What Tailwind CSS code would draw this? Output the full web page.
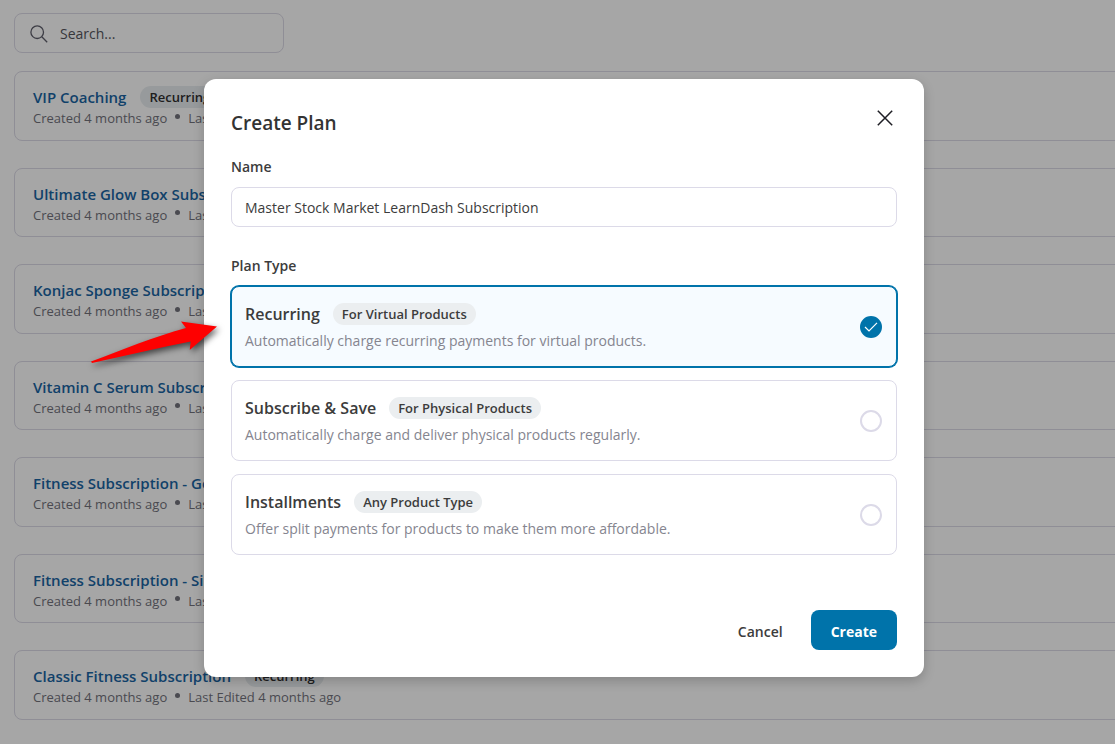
<!DOCTYPE html>
<html lang="en">
<head>
<meta charset="utf-8">
<title>Create Plan</title>
<script src="https://cdn.jsdelivr.net/npm/@tailwindcss/browser@4"></script>
</head>
<body class="relative h-screen overflow-hidden bg-white font-['Open_Sans',sans-serif] text-[#3c3c3c]">

<main class="pl-[14px] pt-[13px]">
  <label class="flex h-10 w-[270px] items-center gap-3 rounded-lg border border-[#dcdae6] px-[15px] text-[#5f5f6b]">
    <svg class="mt-px size-[18px] shrink-0" viewBox="0 0 18 18" fill="none" stroke="currentColor" stroke-width="1.3"><circle cx="7.2" cy="7.2" r="6.3"/><path d="M11.8 11.8 17.2 17.2"/></svg>
    <input type="search" aria-label="Search" placeholder="Search..." class="w-full bg-transparent pt-px text-sm outline-none placeholder:text-[#55555b]">
  </label>

  <ul class="-mr-5 mt-[18px] grid min-h-[649px] auto-rows-fr gap-[27px] text-[13px] leading-5 text-[#72727c]">
    <li class="rounded-lg border border-[#dcdae6] px-[18px] pt-[14px]">
      <div class="flex items-center gap-[14px]"><a href="#" class="text-[15px] leading-[22px] font-semibold text-[#1a65a3]">VIP Coaching</a><span class="rounded-full bg-[#e9edf0] px-[9px] leading-[22px] font-semibold text-[#2f2f2f]">Recurring</span></div>
      <p class="flex items-center gap-2">Created 4 months ago <i class="mb-1 size-[5px] rounded-full bg-[#72727c]"></i> Last Edited 4 months ago</p>
    </li>
    <li class="rounded-lg border border-[#dcdae6] px-[18px] pt-[14px]">
      <div class="flex items-center gap-[14px]"><a href="#" class="text-[15px] leading-[22px] font-semibold text-[#1a65a3]">Ultimate Glow Box Subscription</a><span class="rounded-full bg-[#e9edf0] px-[9px] leading-[22px] font-semibold text-[#2f2f2f]">Recurring</span></div>
      <p class="flex items-center gap-2">Created 4 months ago <i class="mb-1 size-[5px] rounded-full bg-[#72727c]"></i> Last Edited 4 months ago</p>
    </li>
    <li class="rounded-lg border border-[#dcdae6] px-[18px] pt-[14px]">
      <div class="flex items-center gap-[14px]"><a href="#" class="text-[15px] leading-[22px] font-semibold text-[#1a65a3]">Konjac Sponge Subscription</a><span class="rounded-full bg-[#e9edf0] px-[9px] leading-[22px] font-semibold text-[#2f2f2f]">Recurring</span></div>
      <p class="flex items-center gap-2">Created 4 months ago <i class="mb-1 size-[5px] rounded-full bg-[#72727c]"></i> Last Edited 4 months ago</p>
    </li>
    <li class="rounded-lg border border-[#dcdae6] px-[18px] pt-[14px]">
      <div class="flex items-center gap-[14px]"><a href="#" class="text-[15px] leading-[22px] font-semibold text-[#1a65a3]">Vitamin C Serum Subscription</a><span class="rounded-full bg-[#e9edf0] px-[9px] leading-[22px] font-semibold text-[#2f2f2f]">Recurring</span></div>
      <p class="flex items-center gap-2">Created 4 months ago <i class="mb-1 size-[5px] rounded-full bg-[#72727c]"></i> Last Edited 4 months ago</p>
    </li>
    <li class="rounded-lg border border-[#dcdae6] px-[18px] pt-[14px]">
      <div class="flex items-center gap-[14px]"><a href="#" class="text-[15px] leading-[22px] font-semibold text-[#1a65a3]">Fitness Subscription - Gold</a><span class="rounded-full bg-[#e9edf0] px-[9px] leading-[22px] font-semibold text-[#2f2f2f]">Recurring</span></div>
      <p class="flex items-center gap-2">Created 4 months ago <i class="mb-1 size-[5px] rounded-full bg-[#72727c]"></i> Last Edited 4 months ago</p>
    </li>
    <li class="rounded-lg border border-[#dcdae6] px-[18px] pt-[14px]">
      <div class="flex items-center gap-[14px]"><a href="#" class="text-[15px] leading-[22px] font-semibold text-[#1a65a3]">Fitness Subscription - Silver</a><span class="rounded-full bg-[#e9edf0] px-[9px] leading-[22px] font-semibold text-[#2f2f2f]">Recurring</span></div>
      <p class="flex items-center gap-2">Created 4 months ago <i class="mb-1 size-[5px] rounded-full bg-[#72727c]"></i> Last Edited 4 months ago</p>
    </li>
    <li class="rounded-lg border border-[#dcdae6] px-[18px] pt-[14px]">
      <div class="flex items-center gap-[14px]"><a href="#" class="text-[15px] leading-[22px] font-semibold text-[#1a65a3]">Classic Fitness Subscription</a><span class="rounded-full bg-[#e9edf0] px-[9px] leading-[22px] font-semibold text-[#2f2f2f]">Recurring</span></div>
      <p class="flex items-center gap-2">Created 4 months ago <i class="mb-1 size-[5px] rounded-full bg-[#72727c]"></i> Last Edited 4 months ago</p>
    </li>
  </ul>
</main>

<div class="absolute inset-0 flex items-start justify-center bg-black/35 pl-[13px] pt-[79px]">
  <form role="dialog" aria-labelledby="dialog-title" class="w-full max-w-[720px] rounded-xl bg-white p-[27px] shadow-[0_4px_12px_rgba(0,0,0,0.2)]">
    <header class="flex items-start justify-between">
      <h2 id="dialog-title" class="pt-1 text-[19px] leading-[26px] font-semibold text-[#333]">Create Plan</h2>
      <button type="button" aria-label="Close" class="grid size-6 place-items-center text-[#1e1e24]">
        <svg class="size-4" viewBox="0 0 16 16" fill="none" stroke="currentColor" stroke-width="1.5"><path d="M.8.8l14.4 14.4M15.2.8.8 15.2"/></svg>
      </button>
    </header>

    <label for="plan-name" class="mt-[21px] block text-sm leading-5 font-semibold">Name</label>
    <input id="plan-name" type="text" value="Master Stock Market LearnDash Subscription" class="mt-[10px] block h-10 w-full rounded-lg border border-[#dcdae8] px-[13px] text-sm outline-none">

    <fieldset class="mt-[29px]">
      <legend class="text-sm leading-5 font-semibold">Plan Type</legend>
      <div class="mt-[10px] grid gap-[13px]">
        <label class="flex items-center justify-between rounded-lg border border-[#dcdae8] pt-[15px] pb-[15px] pr-[14px] pl-[13px] has-checked:border-[#0073aa] has-checked:bg-[#f6fbff] has-checked:ring-1 has-checked:ring-[#0073aa]">
          <span class="grid gap-[5px]">
            <span class="flex items-center gap-[13px]"><b class="text-base leading-6 font-semibold">Recurring</b><span class="rounded-full bg-[#ebeef0] px-[9px] text-[13px] leading-[22px] font-semibold">For Virtual Products</span></span>
            <span class="text-sm leading-5 text-[#85858f]">Automatically charge recurring payments for virtual products.</span>
          </span>
          <span class="grid place-items-center">
            <input type="radio" name="plan" checked class="peer col-start-1 row-start-1 size-[22px] appearance-none rounded-full border-2 border-[#dcdae8] checked:border-[#0073aa] checked:bg-[#0073aa]">
            <svg class="invisible col-start-1 row-start-1 h-[10px] w-[14px] peer-checked:visible" viewBox="0 0 14 10" fill="none" stroke="#fff" stroke-width="1.2"><path d="M1 5l4 4L13 .8"/></svg>
          </span>
        </label>
        <label class="flex items-center justify-between rounded-lg border border-[#dcdae8] pt-[15px] pb-[15px] pr-[14px] pl-[13px] has-checked:border-[#0073aa] has-checked:bg-[#f6fbff] has-checked:ring-1 has-checked:ring-[#0073aa]">
          <span class="grid gap-[5px]">
            <span class="flex items-center gap-[13px]"><b class="text-base leading-6 font-semibold">Subscribe &amp; Save</b><span class="rounded-full bg-[#ebeef0] px-[9px] text-[13px] leading-[22px] font-semibold">For Physical Products</span></span>
            <span class="text-sm leading-5 text-[#85858f]">Automatically charge and deliver physical products regularly.</span>
          </span>
          <span class="grid place-items-center">
            <input type="radio" name="plan" class="peer col-start-1 row-start-1 size-[22px] appearance-none rounded-full border-2 border-[#dcdae8] checked:border-[#0073aa] checked:bg-[#0073aa]">
            <svg class="invisible col-start-1 row-start-1 h-[10px] w-[14px] peer-checked:visible" viewBox="0 0 14 10" fill="none" stroke="#fff" stroke-width="1.2"><path d="M1 5l4 4L13 .8"/></svg>
          </span>
        </label>
        <label class="flex items-center justify-between rounded-lg border border-[#dcdae8] pt-[15px] pb-[15px] pr-[14px] pl-[13px] has-checked:border-[#0073aa] has-checked:bg-[#f6fbff] has-checked:ring-1 has-checked:ring-[#0073aa]">
          <span class="grid gap-[5px]">
            <span class="flex items-center gap-[13px]"><b class="text-base leading-6 font-semibold">Installments</b><span class="rounded-full bg-[#ebeef0] px-[9px] text-[13px] leading-[22px] font-semibold">Any Product Type</span></span>
            <span class="text-sm leading-5 text-[#85858f]">Offer split payments for products to make them more affordable.</span>
          </span>
          <span class="grid place-items-center">
            <input type="radio" name="plan" class="peer col-start-1 row-start-1 size-[22px] appearance-none rounded-full border-2 border-[#dcdae8] checked:border-[#0073aa] checked:bg-[#0073aa]">
            <svg class="invisible col-start-1 row-start-1 h-[10px] w-[14px] peer-checked:visible" viewBox="0 0 14 10" fill="none" stroke="#fff" stroke-width="1.2"><path d="M1 5l4 4L13 .8"/></svg>
          </span>
        </label>
      </div>
    </fieldset>

    <footer class="mt-[55px] flex justify-end gap-2">
      <button type="button" class="h-10 px-5 pt-[3px] text-sm font-semibold">Cancel</button>
      <button type="submit" class="h-10 rounded-lg bg-[#0073aa] px-5 pt-[3px] text-sm font-bold text-white">Create</button>
    </footer>
  </form>
</div>

<!-- Pointer to the selected plan type -->
<svg class="absolute top-[310px] left-[80px] h-[70px] w-[150px] overflow-visible drop-shadow-[2px_3px_3px_rgba(0,0,0,0.6)]" viewBox="0 0 150 70"><path d="M11 51.500C42 40 73 27 106 18L101 11.600 137 16.600 109.700 40 110.700 31.500C78 38 45 46 12 53Z" fill="#fe0000"/></svg>
</body>
</html>
